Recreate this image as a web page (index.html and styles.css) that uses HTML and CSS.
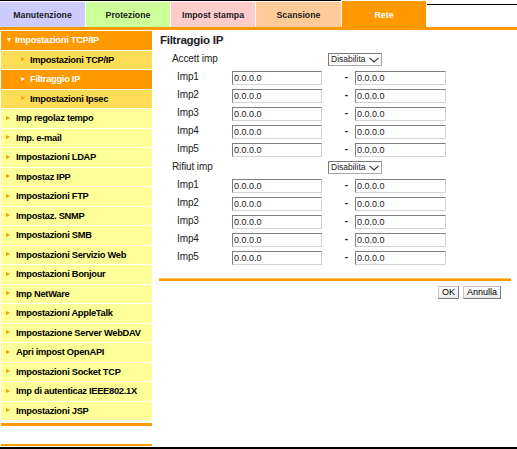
FILE: index.html
```html
<!DOCTYPE html>
<html lang="it">
<head>
<meta charset="utf-8">
<title>Filtraggio IP</title>
<link rel="stylesheet" href="styles.css">
</head>
<body>
<div class="page">
  <div class="tabs">
    <div class="tabs-left">
      <div class="tab t-maint">Manutenzione</div>
      <div class="tab t-prot">Protezione</div>
      <div class="tab t-print">Impost stampa</div>
      <div class="tab t-scan">Scansione</div>
    </div>
    <div class="tab t-rete">Rete</div>
    <div class="tab-rest"></div>
  </div>
  <div class="tabs-line"></div>
  <div class="main">
    <nav class="side">
      <div class="item open"><span class="down"></span>Impostazioni TCP/IP</div>
      <div class="item sub"><span class="arr"></span>Impostazioni TCP/IP</div>
      <div class="item sub cur"><span class="arr"></span>Filtraggio IP</div>
      <div class="item sub"><span class="arr"></span>Impostazioni Ipsec</div>
      <div class="item"><span class="arr"></span>Imp regolaz tempo</div>
      <div class="item"><span class="arr"></span>Imp. e-mail</div>
      <div class="item"><span class="arr"></span>Impostazioni LDAP</div>
      <div class="item"><span class="arr"></span>Impostaz IPP</div>
      <div class="item"><span class="arr"></span>Impostazioni FTP</div>
      <div class="item"><span class="arr"></span>Impostaz. SNMP</div>
      <div class="item"><span class="arr"></span>Impostazioni SMB</div>
      <div class="item"><span class="arr"></span>Impostazioni Servizio Web</div>
      <div class="item"><span class="arr"></span>Impostazioni Bonjour</div>
      <div class="item"><span class="arr"></span>Imp NetWare</div>
      <div class="item"><span class="arr"></span>Impostazioni AppleTalk</div>
      <div class="item"><span class="arr"></span>Impostazione Server WebDAV</div>
      <div class="item"><span class="arr"></span>Apri impost OpenAPI</div>
      <div class="item"><span class="arr"></span>Impostazioni Socket TCP</div>
      <div class="item"><span class="arr"></span>Imp di autenticaz IEEE802.1X</div>
      <div class="item"><span class="arr"></span>Impostazioni JSP</div>
      <div class="side-rule"></div>
      <div class="side-rule2"></div>
    </nav>
    <section class="content">
      <h1 class="title">Filtraggio IP</h1>

      <div class="row sec"><span class="lbl">Accett imp</span>
        <div class="select"><span>Disabilita</span><svg width="10" height="6" viewBox="0 0 10 6"><path d="M0.5 0.8 L5 5 L9.5 0.8" fill="none" stroke="#333" stroke-width="1.1"/></svg></div>
      </div>
      <div class="row ip"><span class="lbl">Imp1</span><input class="in in-l" type="text" value="0.0.0.0"><span class="dash">-</span><input class="in in-r" type="text" value="0.0.0.0"></div>
      <div class="row ip"><span class="lbl">Imp2</span><input class="in in-l" type="text" value="0.0.0.0"><span class="dash">-</span><input class="in in-r" type="text" value="0.0.0.0"></div>
      <div class="row ip"><span class="lbl">Imp3</span><input class="in in-l" type="text" value="0.0.0.0"><span class="dash">-</span><input class="in in-r" type="text" value="0.0.0.0"></div>
      <div class="row ip"><span class="lbl">Imp4</span><input class="in in-l" type="text" value="0.0.0.0"><span class="dash">-</span><input class="in in-r" type="text" value="0.0.0.0"></div>
      <div class="row ip"><span class="lbl">Imp5</span><input class="in in-l" type="text" value="0.0.0.0"><span class="dash">-</span><input class="in in-r" type="text" value="0.0.0.0"></div>

      <div class="row sec"><span class="lbl">Rifiut imp</span>
        <div class="select"><span>Disabilita</span><svg width="10" height="6" viewBox="0 0 10 6"><path d="M0.5 0.8 L5 5 L9.5 0.8" fill="none" stroke="#333" stroke-width="1.1"/></svg></div>
      </div>
      <div class="row ip"><span class="lbl">Imp1</span><input class="in in-l" type="text" value="0.0.0.0"><span class="dash">-</span><input class="in in-r" type="text" value="0.0.0.0"></div>
      <div class="row ip"><span class="lbl">Imp2</span><input class="in in-l" type="text" value="0.0.0.0"><span class="dash">-</span><input class="in in-r" type="text" value="0.0.0.0"></div>
      <div class="row ip"><span class="lbl">Imp3</span><input class="in in-l" type="text" value="0.0.0.0"><span class="dash">-</span><input class="in in-r" type="text" value="0.0.0.0"></div>
      <div class="row ip"><span class="lbl">Imp4</span><input class="in in-l" type="text" value="0.0.0.0"><span class="dash">-</span><input class="in in-r" type="text" value="0.0.0.0"></div>
      <div class="row ip"><span class="lbl">Imp5</span><input class="in in-l" type="text" value="0.0.0.0"><span class="dash">-</span><input class="in in-r" type="text" value="0.0.0.0"></div>

      <div class="rule"></div>
      <div class="actions">
        <button class="btn btn-ok" type="button">OK</button>
        <button class="btn btn-cancel" type="button">Annulla</button>
      </div>
    </section>
  </div>
</div>
</body>
</html>
```
FILE: styles.css
```css
* { box-sizing: border-box; }

html, body {
  margin: 0;
  padding: 0;
  background: #fff;
}

body {
  font-family: "Liberation Sans", Arial, sans-serif;
  color: #111;
}

.page {
  width: 517px;
  height: 449px;
  border-bottom: 2px solid #000;
  display: flex;
  flex-direction: column;
  overflow: hidden;
}

/* ---------- tabs ---------- */
.tabs {
  display: flex;
  height: 27px;
  flex: none;
}

.tabs-left {
  display: flex;
  gap: 1px;
  border-top: 1px solid #000;
  padding-top: 1px;
  margin-right: 1px;
}

.tab {
  height: 25px;
  display: flex;
  align-items: center;
  justify-content: center;
  font-size: 8.8px;
  font-weight: bold;
  color: #222;
}

.t-maint { width: 85px; background: #ccccff; }
.t-prot  { width: 84px; background: #ccff99; }
.t-print { width: 84px; background: #ffcccc; }
.t-scan  { width: 85px; background: #ffcc99; }

.t-rete {
  width: 84px;
  height: 26px;
  margin-top: 1px;
  background: #ff9900;
  color: #fff;
  padding-top: 1px;
}

.tab-rest {
  flex: 1;
  margin-top: 4px;
  margin-left: 1px;
  border-top: 1px solid #000;
}

.tabs-line {
  height: 3px;
  background: #ff9900;
  flex: none;
}

/* ---------- layout ---------- */
.main {
  flex: 1;
  display: flex;
}

/* ---------- sidebar ---------- */
.side {
  width: 151px;
  margin-left: 1px;
  padding-top: 1px;
  display: flex;
  flex-direction: column;
  flex: none;
}

.item {
  height: 19.5px;
  border-bottom: 1px solid #fff;
  background: #ffff99;
  display: flex;
  align-items: center;
  padding-left: 5px;
  font-size: 9.3px;
  font-weight: bold;
  letter-spacing: -0.28px;
  color: #000;
  white-space: nowrap;
}

.item .arr {
  width: 0;
  height: 0;
  border-left: 4px solid #ff9900;
  border-top: 2.5px solid transparent;
  border-bottom: 2.5px solid transparent;
  margin-right: 6px;
  margin-top: -1px;
}

.item.open {
  background: #ff9900;
  color: #fff;
  padding-left: 6px;
}

.item .down {
  width: 0;
  height: 0;
  border-top: 4px solid #fff;
  border-left: 2.5px solid transparent;
  border-right: 2.5px solid transparent;
  margin-right: 4px;
}

.item.sub {
  background: #ffdd55;
  padding-left: 20px;
}

.item.sub .arr { margin-right: 5px; }

.item.cur {
  background: #ff9900;
  color: #fff;
}

.item.cur .arr { border-left-color: #fff; }

.side-rule {
  height: 3px;
  margin-top: 2px;
  background: #ff9900;
}

.side-rule2 {
  height: 2px;
  margin-top: auto;
  margin-bottom: 1px;
  background: #ff9900;
}

/* ---------- content ---------- */
.content {
  width: 352px;
  margin-left: 7px;
  padding-top: 1px;
}

.title {
  margin: 0;
  height: 19px;
  line-height: 18px;
  padding-left: 1px;
  font-size: 11.6px;
  font-weight: bold;
  letter-spacing: -0.3px;
  color: #222;
}

.row {
  display: flex;
  align-items: flex-start;
  height: 18px;
  line-height: 18px;
  font-size: 10px;
  letter-spacing: -0.1px;
  color: #222;
}

.sec .lbl {
  width: 169px;
  padding-left: 13px;
  flex: none;
}

.ip .lbl {
  width: 73px;
  padding-left: 18px;
  flex: none;
}

.in {
  margin: 3px 0 0 0;
  height: 14px;
  padding: 0 0 0 1px;
  border: 1px solid;
  border-color: #7e7e7e #d2d2d2 #d2d2d2 #7e7e7e;
  background: #fff;
  font-family: "Liberation Sans", Arial, sans-serif;
  font-size: 9px;
  color: #222;
  outline: none;
}

.in-l { width: 90px; }
.in-r { width: 91px; }

.dash {
  width: 33px;
  text-align: right;
  padding-right: 7px;
  font-weight: bold;
  flex: none;
}

.select {
  margin-top: 3px;
  width: 54px;
  height: 13px;
  border: 1px solid;
  border-color: #7a7a7a #a8a8a8 #a8a8a8 #7a7a7a;
  background: #fff;
  display: flex;
  align-items: center;
  justify-content: space-between;
  padding: 0 2px 0 2px;
  font-size: 8.5px;
  letter-spacing: 0;
  line-height: 11px;
  color: #222;
}

.select svg { flex: none; }

.rule {
  margin-top: 12px;
  height: 3px;
  border-top: 1px solid #ffc266;
  background: #ff9900;
}

.actions {
  display: flex;
  justify-content: flex-end;
  gap: 4px;
  padding-right: 10px;
  margin-top: 5px;
}

.btn {
  height: 13px;
  padding: 0;
  border: 1px solid;
  border-color: #c4c4c4 #7a7a7a #7a7a7a #c4c4c4;
  background: linear-gradient(#fbfbfb, #ececec);
  font-family: "Liberation Sans", Arial, sans-serif;
  font-size: 9px;
  line-height: 11px;
  color: #000;
}

.btn-ok { width: 21px; }
.btn-cancel { width: 38px; }
```
